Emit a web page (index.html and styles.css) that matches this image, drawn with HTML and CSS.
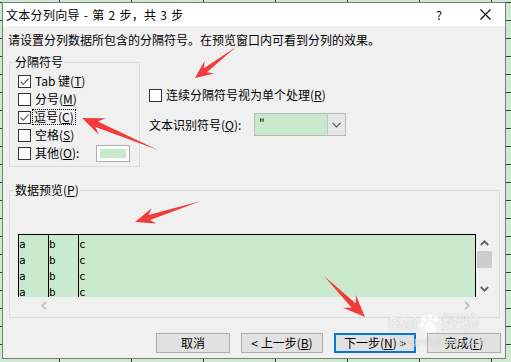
FILE: index.html
```html
<!DOCTYPE html>
<html lang="zh-CN">
<head>
  <meta charset="UTF-8" />
  <title>文本分列向导</title>
  <link rel="stylesheet" href="styles.css">
</head>
<body>
  <div class="dialog">
    <div class="titlebar">
      <span class="title">文本分列向导 - 第 2 步，共 3 步</span>
      <span class="help">?</span>
      <span class="close">
        <svg width="11" height="11" viewBox="0 0 11 11"><path d="M0.5 0.5 L10.5 10.5 M10.5 0.5 L0.5 10.5" stroke="#000" stroke-width="1.1" fill="none"/></svg>
      </span>
    </div>

    <div class="content">
      <p class="intro">请设置分列数据所包含的分隔符号。在预览窗口内可看到分列的效果。</p>

      <div class="top-row">
        <fieldset class="group sep">
          <legend>分隔符号</legend>
          <div class="opts">
            <div class="opt"><span class="box checked"></span>Tab 键(<u>T</u>)</div>
            <div class="opt"><span class="box"></span>分号(<u>M</u>)</div>
            <div class="opt"><span class="box checked"></span><span class="focus">逗号(<u>C</u>)</span></div>
            <div class="opt"><span class="box"></span>空格(<u>S</u>)</div>
            <div class="opt"><span class="box"></span>其他(<u>O</u>):<span class="swatch"></span></div>
          </div>
        </fieldset>

        <div class="side">
          <div class="opt"><span class="box"></span>连续分隔符号视为单个处理(<u>R</u>)</div>
          <div class="qualifier">
            <span class="q-label">文本识别符号(<u>Q</u>):</span>
            <div class="combo">
              <span class="combo-val">"</span>
              <span class="combo-btn">
                <svg width="9" height="6" viewBox="0 0 9 6"><path d="M0.5 0.8 L4.5 4.8 L8.5 0.8" stroke="#555" stroke-width="1.2" fill="none"/></svg>
              </span>
            </div>
          </div>
        </div>
      </div>

      <fieldset class="group preview">
        <legend>数据预览(<u>P</u>)</legend>
        <div class="grid-area">
          <div class="grid-main">
            <div class="cells">
              <div class="col first">a<br>a<br>a<br>a</div>
              <div class="col">b<br>b<br>b<br>b</div>
              <div class="col last">c<br>c<br>c<br>c</div>
            </div>
            <div class="hscroll">
              <svg width="6" height="9" viewBox="0 0 6 9"><path d="M5 0.8 L1.3 4.5 L5 8.2" stroke="#c2c2c2" stroke-width="1.8" fill="none"/></svg>
              <svg width="6" height="9" viewBox="0 0 6 9"><path d="M1 0.8 L4.7 4.5 L1 8.2" stroke="#c2c2c2" stroke-width="1.8" fill="none"/></svg>
            </div>
          </div>
          <div class="vscroll">
            <span class="arrow"><svg width="9" height="6" viewBox="0 0 9 6"><path d="M0.8 5 L4.5 1.3 L8.2 5" stroke="#606060" stroke-width="1.8" fill="none"/></svg></span>
            <span class="thumb"></span>
            <span class="track"></span>
            <span class="arrow"><svg width="9" height="6" viewBox="0 0 9 6"><path d="M0.8 1 L4.5 4.7 L8.2 1" stroke="#606060" stroke-width="1.8" fill="none"/></svg></span>
          </div>
        </div>
      </fieldset>

      <div class="buttons">
        <button class="btn small">取消</button>
        <button class="btn">&lt; 上一步(<u>B</u>)</button>
        <button class="btn primary">下一步(<u>N</u>) &gt;</button>
        <button class="btn small">完成(<u>F</u>)</button>
      </div>
    </div>
  </div>

  <!-- red annotation arrows -->
  <svg class="marks" width="511" height="362" viewBox="0 0 511 362">
    <polygon points="236,47 206.9,72.2 214.2,73.5 195,78 204.6,60.7 203.9,68.2" />
    <polygon points="158,150 95.5,127 98.8,134.8 82,118 105.8,118.2 97.9,121.4" />
    <polygon points="201,201 150.1,219.9 156.4,223.5 135,222 151.6,208.3 148.5,215.1" />
    <polygon points="324,276 355.8,303.6 355.8,295 365,317 343,307.8 351.6,307.8" />
  </svg>

  <div class="watermark">
    <div class="wm-logo">
      <span>Bai</span>
      <svg width="22" height="20" viewBox="0 0 22 20">
        <ellipse cx="5" cy="5" rx="2.6" ry="3.2"/>
        <ellipse cx="11" cy="3.2" rx="2.6" ry="3.2"/>
        <ellipse cx="17" cy="5" rx="2.6" ry="3.2"/>
        <ellipse cx="3" cy="11" rx="2.3" ry="2.8"/>
        <path d="M11 8 C7 8 4 14 5 17 C6 19.5 9 18.5 11 18.5 C13 18.5 16 19.5 17 17 C18 14 15 8 11 8 Z"/>
      </svg>
      <span>经验</span>
    </div>
    <div class="wm-url">jingyan.baidu.com</div>
  </div>
</body>
</html>
```

FILE: styles.css
```css
* {
  box-sizing: border-box;
}

body {
  margin: 0;
  width: 511px;
  height: 362px;
  overflow: hidden;
  position: relative;
  background-color: #cde9d0;
  background-image:
    linear-gradient(#3c3c3c 1px, transparent 1px),
    linear-gradient(90deg, #3c3c3c 1px, transparent 1px);
  background-size: 72px 18px;
  background-position: 59px 2px;
  font-family: "Noto Sans CJK SC", "Microsoft YaHei", sans-serif;
  font-size: 12px;
  color: #000;
}

.dialog {
  margin: 2px 0 0 2px;
  width: 504px;
  height: 357px;
  border: 1px solid #7d7d7d;
  background: #f0f0f0;
}

.titlebar {
  height: 23px;
  background: #fff;
  display: flex;
  align-items: center;
}

.title {
  flex: 1;
  padding-left: 3px;
  line-height: 16px;
  word-spacing: 1px;
  letter-spacing: 0.3px;
}

.help {
  width: 52px;
  text-align: center;
  line-height: 16px;
}

.close {
  width: 40px;
  display: flex;
  justify-content: center;
}

.content {
  padding: 6px 4px 0 6px;
}

.intro {
  margin: 0 0 0 -1px;
  line-height: 16px;
}

.top-row {
  display: flex;
  gap: 9px;
  margin-top: 7px;
}

fieldset {
  margin: 0;
  padding: 0;
  min-width: 0;
  border: 1px solid #dcdcdc;
}

legend {
  margin-left: 4px;
  padding: 0 1px;
  line-height: 14px;
}

.sep {
  width: 131px;
}

.opts {
  padding: 3px 0 4px 8px;
}

.opt {
  display: flex;
  align-items: center;
  height: 18px;
  line-height: 14px;
}

.box {
  flex: none;
  width: 13px;
  height: 13px;
  margin-right: 4px;
  border: 1px solid #333;
  background: #fff;
}

.box.checked {
  background: #fff url("data:image/svg+xml,%3Csvg xmlns='http://www.w3.org/2000/svg' width='11' height='11'%3E%3Cpath d='M1.5 5.5 L4.3 8.3 L9.6 2.6' stroke='%23555' stroke-width='1.1' fill='none'/%3E%3C/svg%3E") no-repeat center;
}

.focus {
  outline: 1px dotted #000;
  outline-offset: 0;
  padding: 0 1px;
  margin-left: -2px;
}

.swatch {
  margin-left: auto;
  margin-right: 9px;
  width: 34px;
  height: 17px;
  border: 1px solid #adadad;
  background: #c9e9cd;
  box-shadow: inset 0 0 0 3px #fff;
}

.side {
  padding-top: 31px;
}

.qualifier {
  display: flex;
  align-items: center;
  height: 23px;
  margin-top: 9px;
}

.q-label {
  width: 105px;
}

.combo {
  display: flex;
  width: 92px;
  height: 23px;
  border: 1px solid #b8b8b8;
  background: #c9e9cd;
}

.combo-val {
  flex: 1;
  padding-left: 4px;
  line-height: 19px;
}

.combo-btn {
  width: 18px;
  border-left: 1px solid #c4c4c4;
  background: #e6e6e6;
  display: flex;
  align-items: center;
  justify-content: center;
}

.preview {
  width: 491px;
  margin-top: 16px;
}

.grid-area {
  display: flex;
  padding: 37px 7px 3px 8px;
}

.grid-main {
  width: 458px;
}

.cells {
  display: flex;
  height: 63px;
  overflow: hidden;
  border: 1px solid #000;
  border-bottom: none;
  background: #c9e9cd;
  font-family: "DejaVu Sans Mono", "Liberation Mono", monospace;
  font-size: 11px;
  line-height: 16px;
}

.col {
  width: 30px;
  padding-top: 2px;
  border-left: 1px solid #000;
}

.col.first {
  width: 29px;
  border-left: none;
}

.col.last {
  flex: 1;
}

.hscroll {
  height: 17px;
  display: flex;
  align-items: center;
  justify-content: space-between;
  padding: 0 6px 0 23px;
}

.vscroll {
  width: 16px;
  height: 63px;
  display: flex;
  flex-direction: column;
}

.vscroll .arrow {
  height: 17px;
  display: flex;
  align-items: center;
  justify-content: center;
}

.vscroll .thumb {
  height: 17px;
  margin: 0 0 0 1px;
  background: #cdcdcd;
}

.vscroll .track {
  flex: 1;
}

.buttons {
  display: flex;
  justify-content: flex-end;
  gap: 11px;
  margin-top: 15px;
}

.btn {
  width: 82px;
  height: 20px;
  padding: 0;
  border: 1px solid #adadad;
  background: #e1e1e1;
  font-family: inherit;
  font-size: 12px;
  line-height: 16px;
  color: #000;
}

.btn.small {
  width: 74px;
}

.btn.primary {
  border: 2px solid #0078d7;
}

.marks {
  position: absolute;
  top: 0;
  left: 0;
  fill: #f43b3b;
  pointer-events: none;
}

.watermark {
  position: absolute;
  left: 388px;
  top: 313px;
  color: rgba(255, 255, 255, 0.75);
  text-shadow: 0 0 1px rgba(0, 0, 0, 0.25);
  pointer-events: none;
}

.wm-logo {
  display: flex;
  align-items: center;
  font-family: "Liberation Sans", "Noto Sans CJK SC", sans-serif;
  font-size: 19px;
  font-weight: bold;
  line-height: 22px;
}

.wm-logo svg {
  fill: rgba(255, 255, 255, 0.75);
  margin: 0 1px;
}

.wm-url {
  margin: 1px 0 0 12px;
  font-family: "Liberation Sans", sans-serif;
  font-size: 10px;
  line-height: 12px;
  letter-spacing: 0.3px;
}
```
